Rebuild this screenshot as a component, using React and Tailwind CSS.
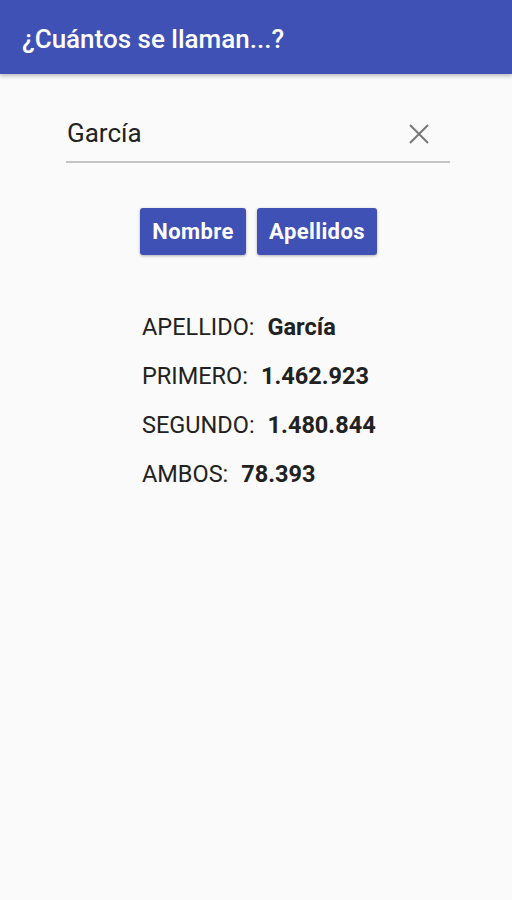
import React from "react";

export default function App() {
  const rows = [
    ["APELLIDO:", "García"],
    ["PRIMERO:", "1.462.923"],
    ["SEGUNDO:", "1.480.844"],
    ["AMBOS:", "78.393"],
  ];
  return (
    <div className="w-[512px] h-[900px] bg-[#fafafa] flex flex-col" style={{ fontFamily: "Roboto, 'Liberation Sans', sans-serif" }}>
      <div className="h-[74px] bg-[#3f51b5] flex items-center pl-[22px] pt-[4px] shadow-[0_2px_4px_rgba(0,0,0,0.25)]">
        <span className="text-white text-[26px] font-medium">¿Cuántos se llaman...?</span>
      </div>
      <div className="mt-[40px] mx-[66px] w-[384px] h-[49px] border-b-2 border-[#c4c4c4] flex items-center justify-between pb-[8px]">
        <span className="pl-[1px] text-[26px] text-[#222]">García</span>
        <svg width="20" height="20" viewBox="0 0 20 20" className="mr-[21px]">
          <path d="M1 1 L19 19 M19 1 L1 19" stroke="#777" strokeWidth="2" fill="none" />
        </svg>
      </div>
      <div className="mt-[45px] flex justify-center gap-[11px] pl-[5px]">
        <button className="h-[47px] w-[106px] rounded-[3px] bg-[#3f51b5] text-white text-[22px] tracking-[0.4px] font-bold shadow-[0_1px_3px_rgba(0,0,0,0.3)]">Nombre</button>
        <button className="h-[47px] w-[120px] rounded-[3px] bg-[#3f51b5] text-white text-[22px] tracking-[0.4px] font-bold shadow-[0_1px_3px_rgba(0,0,0,0.3)]">Apellidos</button>
      </div>
      <div className="mt-[58px] ml-[142px] flex flex-col gap-[21px]">
        {rows.map(([l, v]) => (
          <div key={l} className="flex items-baseline gap-[13px] text-[23.5px] leading-[28px] text-[#212121]">
            <span>{l}</span>
            <span className="font-bold">{v}</span>
          </div>
        ))}
      </div>
    </div>
  );
}
